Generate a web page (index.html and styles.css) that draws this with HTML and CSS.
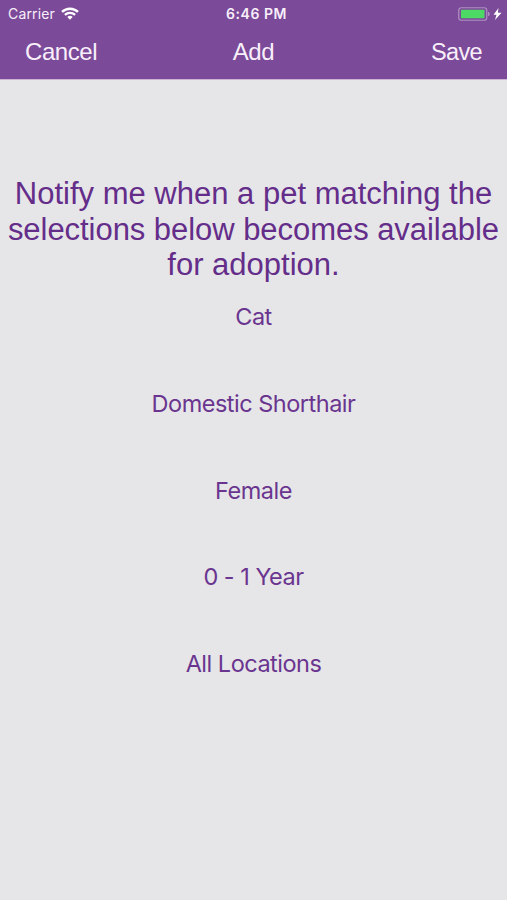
FILE: index.html
```html
<!DOCTYPE html>
<html lang="en">
<head>
<meta charset="utf-8">
<title>Add</title>
<link rel="stylesheet" href="styles.css">
</head>
<body>
<header>
  <div class="status">
    <div class="carrier"><span>Carrier</span>
      <svg width="18" height="13" viewBox="0 0 18 13" fill="none" stroke="#fff" stroke-width="2.4"><path d="M1 4.900C5.500.600 12.500.600 17 4.900M3.900 7.900C6.800 5.200 11.200 5.200 14.100 7.900"/><path d="M6.300 9.900Q9 7.700 11.700 9.900L9 12.700Z" fill="#fff" stroke="none"/></svg>
    </div>
    <span class="time">6:46 PM</span>
    <div class="power">
      <svg width="44" height="14" viewBox="0 0 44 14"><rect x=".75" y=".75" width="28" height="12.500" rx="2.500" fill="none" stroke="#b08fc4" stroke-width="1.200"/><rect x="3" y="2.700" width="23.500" height="8.600" rx=".5" fill="#4cd964"/><path d="M30 4.800Q31.800 5.300 31.800 7T30 9.200Z" fill="#b08fc4"/><path d="M40.500 1 35.500 7.800h3L37 13l6.500-7.200h-3.600Z" fill="#fff"/></svg>
    </div>
  </div>
  <nav><button class="cancel">Cancel</button><h1>Add</h1><button class="save">Save</button></nav>
</header>
<main>
  <p class="intro"><span class="l1">Notify me when a pet matching the</span><span class="l2">selections below becomes available</span><span class="l3">for adoption.</span></p>
  <div class="options">
    <button class="cat">Cat</button>
    <button class="breed">Domestic Shorthair</button>
    <button class="sex">Female</button>
    <button class="age">0 - 1 Year</button>
    <button class="place">All Locations</button>
  </div>
</main>
</body>
</html>
```
FILE: styles.css
```css
* { box-sizing: border-box; }
body { margin: 0; min-height: 900px; background: #e6e6e8; color: #642d8a; font-family: "Liberation Sans", sans-serif; }
button { border: 0; padding: 0; background: none; color: inherit; font: inherit; letter-spacing: inherit; white-space: nowrap; }
header { height: 80px; background: #7b4a98; border-bottom: 1px solid #cdb3d8; color: #f8effb; }
.status { display: grid; grid-template-columns: 1fr auto 1fr; height: 27px; align-items: center; font: 14px/27px Inter, sans-serif; }
.carrier { display: flex; align-items: center; gap: 6px; padding-left: 8px; letter-spacing: .15px; }
.time { font-weight: 600; letter-spacing: .55px; padding-left: 6px; }
.power { display: flex; justify-content: flex-end; padding-right: 5px; }
nav { display: grid; grid-template-columns: 1fr auto 1fr; height: 50px; align-items: center; padding: 0 25px; font-size: 24px; letter-spacing: -.45px; }
nav h1 { margin: 0; font: inherit; }
.cancel { justify-self: start; }
.save { justify-self: end; font-size: 23.500px; letter-spacing: -.65px; }
.intro { margin: 0; padding-top: 96px; font-size: 31px; line-height: 35.5px; }
.intro span { display: flex; justify-content: center; white-space: nowrap; }
.intro .l2 { letter-spacing: -.05px; }
.options { display: grid; grid-auto-rows: 86.7px; justify-items: center; margin-top: -9px; color: #6a358f; font: 23.5px Inter, sans-serif; letter-spacing: -.5px; }
```
